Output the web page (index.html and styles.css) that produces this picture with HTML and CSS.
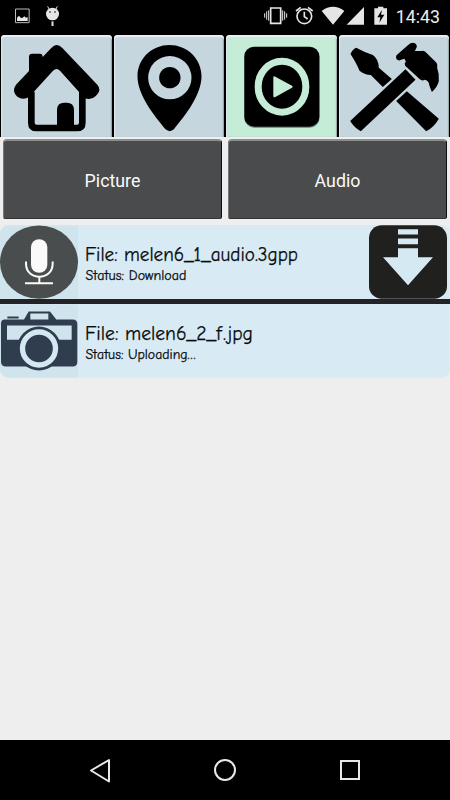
FILE: index.html
```html
<!DOCTYPE html>
<html lang="en">
<head>
<meta charset="utf-8">
<title>Files</title>
<link rel="stylesheet" href="styles.css">
</head>
<body>
<header class="status-bar">
  <svg class="status-left" viewBox="0 0 225 102">
    <path d="M46.500 27h41v41h-41z" fill="none" stroke="#bbb" stroke-width="3"/>
    <path d="M51 63V53l6-6 5 6 5 1 6-5 5 4 5-2v12z" fill="#e5e5e5"/>
    <path d="M143 19l5 10M172 19l-5 10" stroke="#ddd" stroke-width="3"/>
    <ellipse cx="157.500" cy="42" rx="19.500" ry="19" fill="#e5e5e5"/>
    <path d="M154.500 64h6v14h-6z" fill="#ddd"/>
    <circle cx="150" cy="36" r="2.500"/><circle cx="165" cy="36" r="2.500"/>
  </svg>
  <div class="status-right">
    <svg class="status-icons" viewBox="114 0 381 102">
      <g fill="none" stroke="#e5e5e5" stroke-width="5">
        <path d="M137 24h30v46h-30z"/>
        <path d="M131 31v31M125 34v25M119 40v13M173 31v31M179 34v25M185 40v13" stroke-width="3"/>
        <circle cx="238" cy="49" r="22"/>
        <path d="M213 33l14-11M249 22l14 11M238 35v15l10 7"/>
      </g>
      <g fill="#e5e5e5">
        <path d="M290 33Q324 8 358 33L324 74z"/>
        <path d="M365 74h52V21z"/>
        <path d="M448 25h11v-5h16v5h11v49h-38z"/>
      </g>
      <path d="M471 29l-14 23h9l-3 16 15-24h-10z"/>
    </svg>
    <span class="clock">14:43</span>
  </div>
</header>

<nav class="tabs">
  <div class="tab">
    <svg viewBox="0 15 337.500 306">
      <path d="M87 80q0-9 9-9h24q8 0 8 10l26-27q16-18 33 0L292 164q12 14 0 29-14 19-38 12L180 122q-10-10-21 0L88 200q-18 12-36 0-18-17-4-36l39-41z"/>
      <path d="M94 185v93q0 16 16 16h121q16 0 16-16v-93" fill="none" stroke="#000" stroke-width="20"/>
      <path d="M171 290v-50q0-22 22-22h7q22 0 22 22v50z"/>
    </svg>
  </div>
  <div class="tab">
    <svg viewBox="1.500 15 337.500 306">
      <path fill-rule="evenodd" d="M171 45C118 45 75 86 75 139c0 56 48 115 84 159q13 11 25 0c36-44 83-103 83-159 0-53-43-94-96-94zM172 78a65 65 0 1 1 0 130 65 65 0 1 1 0-130z"/>
      <circle cx="172" cy="143" r="32"/>
    </svg>
  </div>
  <div class="tab tab-active">
    <svg viewBox="3 15 337.500 306">
      <rect x="61" y="53" width="226" height="241" rx="30" fill="#4b7466" opacity=".65"/>
      <rect x="61" y="50" width="225" height="240" rx="29"/>
      <ellipse cx="174" cy="170" rx="71.500" ry="76.500" fill="none" stroke="#c5ecd7" stroke-width="21"/>
      <path d="M148 143q0-6 6-3l50 27q5 3 0 6l-50 28q-6 3-6-4z" fill="#c5ecd7"/>
    </svg>
  </div>
  <div class="tab">
    <svg viewBox="7.500 15 337.500 306">
      <path d="M45 72q5-14 17-19 24 13 50 22 17 12 18 38l39 34-27 24-36-36q-20-1-34-13-9-22-27-50z"/>
      <path d="M214 184l96 82q-14 25-38 38l-90-91z"/>
      <path d="M210 118l30 31L76 304q-19-10-32-31z"/>
      <path d="M183 76l35-31q6-7 15-7 11 2 11 12-3 8-6 13l20 0q8-3 13 4l32 31q4 6 2 16 7 18 5 40-5 19-21 32-6-13-10-29-4-8-12-8-6 5-14-1l-44-41q-4-7 2-12l-4-9-10 3q-7 5-14-1-3-8 0-12z"/>
    </svg>
  </div>
</nav>

<main>
  <div class="filters">
    <button class="filter">Picture</button>
    <button class="filter">Audio</button>
  </div>
  <section class="files">
    <article class="file">
      <svg class="thumb" viewBox="0 15 234 219">
        <defs><pattern id="weave" width="6" height="6" patternUnits="userSpaceOnUse"><path d="M0 6L6 0" stroke="#b9d2dd" stroke-width="1"/></pattern></defs>
        <path fill="#d4e8f1" d="M0 15h234v219H0z"/><path fill="url(#weave)" d="M0 15h234v219H0z"/>
        <ellipse cx="117" cy="125" rx="117" ry="110" fill="#4a4d4d"/>
        <rect x="93" y="56" width="49" height="101" rx="24" fill="#fafafa"/>
        <path d="M78 123v7c0 52 80 52 80 0v-7M118 168v20M75 188h84" fill="none" stroke="#fafafa" stroke-width="6"/>
      </svg>
      <div class="details">
        <svg class="caption" viewBox="0 0 250 73"><text class="name" x="0" y="35.500" textLength="213" lengthAdjust="spacingAndGlyphs">File: melen6_1_audio.3gpp</text><text class="state" x="0.500" y="54.500" textLength="101" lengthAdjust="spacingAndGlyphs">Status: Download</text></svg>
      </div>
      <svg class="download" viewBox="57 15 234 221">
        <rect x="57" y="15" width="234" height="221" rx="38" fill="#20201e"/>
        <path d="M144 27h60v16h-60zM144 55h60v17h-60zM144 84h60v27h45l-75 84-75-84h45z" fill="#d5e9f3"/>
      </svg>
    </article>
    <article class="file">
      <svg class="thumb" viewBox="0 252 234 219">
        <path fill="#d4e8f1" d="M0 252h234v219H0z"/><path fill="url(#weave)" d="M0 252h234v219H0z"/>
        <path d="M22 288h34v6H22z" fill="#303d4f"/>
        <path fill="#303d4f" fill-rule="evenodd" d="M14 297h58l14-24h64l19 24h49q14 0 14 14v113q0 14-14 14H18q-15 0-15-14V310q0-13 11-13zM91 279v18h54v-18zM21 315v43h194v-43z"/>
        <circle cx="117" cy="384" r="66" fill="#303d4f"/>
        <circle cx="117" cy="384" r="49.500" fill="none" stroke="#d4e8f1" stroke-width="16"/>
      </svg>
      <div class="details">
        <svg class="caption" viewBox="0 0 250 73"><text class="name" x="0" y="35.500" textLength="168" lengthAdjust="spacingAndGlyphs">File: melen6_2_<tspan class="loose">f.</tspan>jpg</text><text class="state" x="0.500" y="54.500" textLength="111" lengthAdjust="spacingAndGlyphs">Status: Uploading<tspan class="dots">...</tspan></text></svg>
      </div>
    </article>
  </section>
</main>

<footer class="nav-bar">
  <svg viewBox="0 0 450 60" fill="none" stroke="#e8e8e8" stroke-width="2">
    <path d="M109 20v21.500L91 30.500z" stroke-linejoin="round"/>
    <circle cx="225" cy="30" r="10"/>
    <path d="M341 21h18v18h-18z"/>
  </svg>
</footer>
</body>
</html>
```
FILE: styles.css
```css
* { box-sizing: border-box; }
body {
  margin: 0;
  height: 800px;
  display: flex;
  flex-direction: column;
  background: #eeeeee;
  font-family: Roboto, sans-serif;
  overflow: hidden;
}
svg { display: block; }
.status-bar {
  height: 34px;
  display: flex;
  justify-content: space-between;
  background: #000;
}
.status-left { width: 75px; height: 34px; }
.status-right { display: flex; padding-right: 10px; }
.status-icons { width: 127px; height: 34px; }
.clock {
  width: 50px;
  text-align: right;
  color: #ececec;
  font-size: 17.8px;
  line-height: 34px;
}
.tabs {
  height: 103px;
  padding-top: 1px;
  display: grid;
  grid-template-columns: repeat(4, 112.5px);
  background: #000;
}
.tab {
  margin: 0 1px;
  height: 102px;
  background: #c6d6de;
  border-radius: 4px 4px 0 0;
  box-shadow: inset 0 2px 1px #e9eff2, inset 1px 0 1px #dce6eb, inset -1px 0 1px #8d989e;
}
.tab svg { width: 112.5px; height: 102px; margin-left: -1px; }
.tab-active { background: #c5ecd7; }
main { flex: 1; }
.filters {
  padding: 2px 3px 0;
  display: flex;
  justify-content: space-between;
}
.filter {
  width: 219px;
  height: 80px;
  padding: 2px 0 0;
  border: 1px solid #343536;
  border-top: 2px solid #8c8d8d;
  border-left-color: #777;
  border-right: 1px solid #101010;
  border-radius: 4px 4px 2px 2px;
  background: #4a4b4c;
  color: #fafafa;
  font: 17.8px Roboto, sans-serif;
  display: flex;
  align-items: center;
  justify-content: center;
}
.files {
  margin-top: 6px;
  display: grid;
  grid-template-rows: 74px 74px;
  gap: 5px;
  background: linear-gradient(#242224, #242224) 0 74px / 100% 5px no-repeat;
}
.file {
  display: flex;
  height: 74px;
  background: #d8ebf4;
  overflow: hidden;
}
.file:first-child { border-radius: 9px 9px 0 0; }
.file:last-child { border-radius: 0 0 9px 9px; }
.thumb { width: 78px; height: 74px; flex: none; }
.details { flex: 1; padding-left: 7px; }
.caption { width: 250px; height: 73px; overflow: visible; }
.name, .state {
  font-family: "Comic Sans MS", "Comic Neue", Lato, sans-serif;
  font-kerning: none;
  fill: #080a0b;
  stroke: #080a0b;
  stroke-width: 0.25px;
}
.name { font-size: 20.5px; }
.state { font-size: 13px; }
.loose { letter-spacing: 1.5px; }
.dots { letter-spacing: 0.8px; }
.download { width: 78px; height: 74px; margin-right: 3px; flex: none; }
.nav-bar { height: 60px; background: #000; }
.nav-bar svg { width: 450px; height: 60px; }
```
